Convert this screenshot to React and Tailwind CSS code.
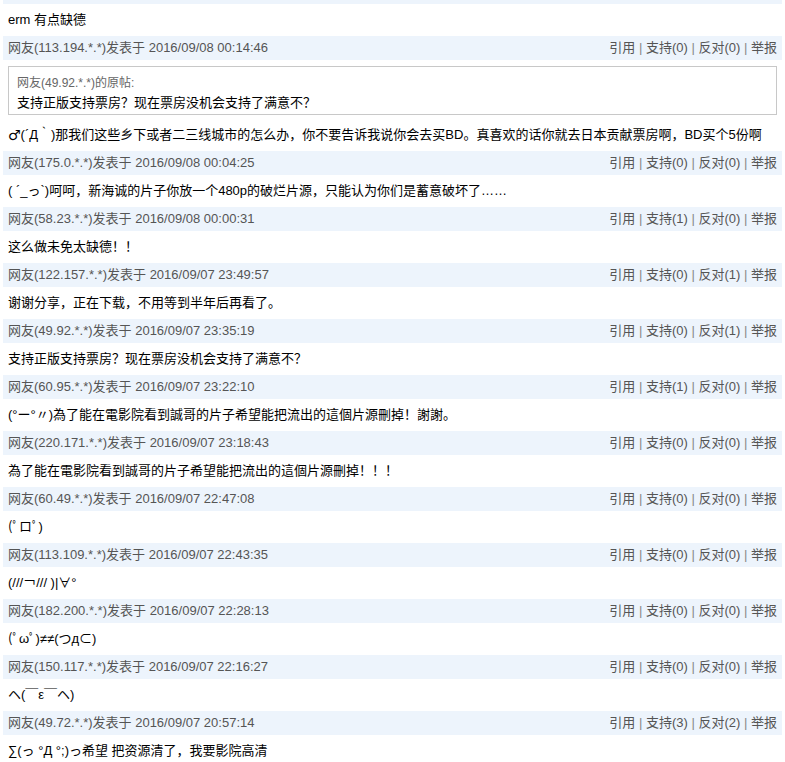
import React from 'react'

const font = { fontFamily: '"Liberation Sans", Arial, "Noto Sans CJK SC", sans-serif' }

const posts = [
  { ip: '175.0.*.*', time: '2016/09/08 00:04:25', up: 0, down: 0, text: '( ´_っ`)呵呵，新海诚的片子你放一个480p的破烂片源，只能认为你们是蓄意破坏了……' },
  { ip: '58.23.*.*', time: '2016/09/08 00:00:31', up: 1, down: 0, text: '这么做未免太缺德！！' },
  { ip: '122.157.*.*', time: '2016/09/07 23:49:57', up: 0, down: 1, text: '谢谢分享，正在下载，不用等到半年后再看了。' },
  { ip: '49.92.*.*', time: '2016/09/07 23:35:19', up: 0, down: 1, text: '支持正版支持票房？现在票房没机会支持了满意不？' },
  { ip: '60.95.*.*', time: '2016/09/07 23:22:10', up: 1, down: 0, text: '(°ー°〃)為了能在電影院看到誠哥的片子希望能把流出的這個片源刪掉！謝謝。' },
  { ip: '220.171.*.*', time: '2016/09/07 23:18:43', up: 0, down: 0, text: '為了能在電影院看到誠哥的片子希望能把流出的這個片源刪掉！！！' },
  { ip: '60.49.*.*', time: '2016/09/07 22:47:08', up: 0, down: 0, text: '(ﾟロﾟ)' },
  { ip: '113.109.*.*', time: '2016/09/07 22:43:35', up: 0, down: 0, text: '(///￢/// )|∀°' },
  { ip: '182.200.*.*', time: '2016/09/07 22:28:13', up: 0, down: 0, text: '(ﾟωﾟ)≠≠(つд⊂)' },
  { ip: '150.117.*.*', time: '2016/09/07 22:16:27', up: 0, down: 0, text: 'ヘ(￣ε￣ヘ)' },
  { ip: '49.72.*.*', time: '2016/09/07 20:57:14', up: 3, down: 2, text: '∑(っ °Д °;)っ希望 把资源清了，我要影院高清' },
]

function Header({ ip, time, up, down }) {
  return (
    <div className="h-[24px] flex items-center justify-between px-[5px] bg-[#edf4fc] text-[13px] text-[#555] whitespace-nowrap">
      <span>网友({ip})发表于 {time}</span>
      <span>
        引用 <span className="text-[#888]">|</span> 支持({up}) <span className="text-[#888]">|</span> 反对({down}) <span className="text-[#888]">|</span> 举报
      </span>
    </div>
  )
}

function Body({ children }) {
  return (
    <div className="h-[32px] flex items-center px-[5px] text-[13px] text-black whitespace-nowrap overflow-hidden">
      {children}
    </div>
  )
}

export default function App() {
  return (
    <div className="w-[785px] h-[762px] overflow-hidden bg-white px-[3px]" style={font}>
      <div className="h-[4px] bg-[#edf4fc]" />
      <Body>erm 有点缺德</Body>

      <Header ip="113.194.*.*" time="2016/09/08 00:14:46" up={0} down={0} />
      <div className="mx-[5px] mt-[6px] border border-[#c8c8c8] px-[8px] pt-[6px] pb-[1px] text-[13px] leading-[20px]">
        <div className="text-[#666] text-[12px]">网友(49.92.*.*)的原帖:</div>
        <div className="text-black">支持正版支持票房？现在票房没机会支持了满意不？</div>
      </div>
      <div className="mt-[4px]">
        <Body>
          <span className="font-['DejaVu_Sans'] text-[14px]">♂</span>(´Д｀)那我们这些乡下或者二三线城市的怎么办，你不要告诉我说你会去买BD。真喜欢的话你就去日本贡献票房啊，BD买个5份啊
        </Body>
      </div>

      {posts.map((p, i) => (
        <div key={i}>
          <Header {...p} />
          <Body>{p.text}</Body>
        </div>
      ))}
    </div>
  )
}
